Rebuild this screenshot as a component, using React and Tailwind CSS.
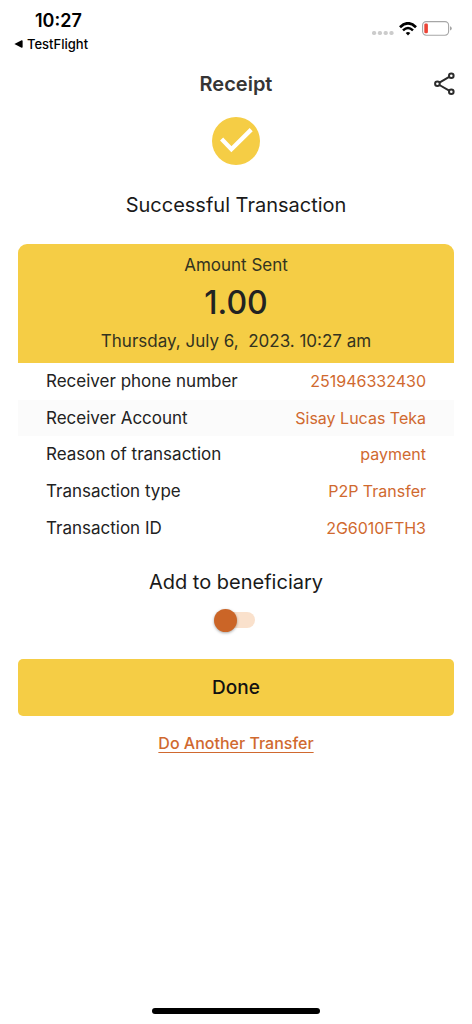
import React, { useState } from "react";

const details = [
  { label: "Receiver phone number", value: "251946332430" },
  { label: "Receiver Account", value: "Sisay Lucas Teka", shaded: true },
  { label: "Reason of transaction", value: "payment" },
  { label: "Transaction type", value: "P2P Transfer" },
  { label: "Transaction ID", value: "2G6010FTH3" },
];

function StatusBar() {
  return (
    <div className="flex h-[58px] items-start justify-between pl-[14px] pr-5 pt-[9px] text-black">
      <div>
        <div className="pl-[21px] text-lg font-semibold leading-6">10:27</div>
        <a href="#testflight" className="flex items-center gap-1 text-[13px] font-medium leading-[22px]">
          <svg className="h-2 w-[9px]" viewBox="0 0 9 8" fill="currentColor" aria-hidden="true">
            <path d="M0.4 4 L7.6 0.2 Q8.6 0 8.6 1 V7 Q8.6 8 7.6 7.8 Z" />
          </svg>
          TestFlight
        </a>
      </div>
      <div className="flex items-center gap-[5px] pt-3">
        <svg className="mt-2 h-1 w-[22px]" viewBox="0 0 22 4" fill="#cccccc" aria-hidden="true">
          <rect x="0" y="0" width="4.2" height="4" rx="1.7" />
          <rect x="5.8" y="0" width="4.2" height="4" rx="1.7" />
          <rect x="11.6" y="0" width="4.2" height="4" rx="1.7" />
          <rect x="17.4" y="0" width="4.2" height="4" rx="1.7" />
        </svg>
        <svg className="h-[14px] w-[18px]" viewBox="0 0 18 14" fill="none" stroke="currentColor" aria-hidden="true">
          <path d="M1 5.2 Q9 -2.6 17 5.2" strokeWidth="2.7" />
          <path d="M4 8.4 Q9 3.6 14 8.4" strokeWidth="2.5" />
          <path d="M6.7 11 Q9 8.9 11.3 11 L9 13.4 Z" fill="currentColor" stroke="none" />
        </svg>
        <svg className="h-[15px] w-[30px]" viewBox="0 0 30 15" aria-hidden="true">
          <rect x="0.6" y="0.6" width="26" height="13.6" rx="3.6" fill="none" stroke="#a6a6a6" strokeWidth="1.1" />
          <rect x="2.3" y="2.5" width="3.6" height="9.8" rx="1.3" fill="#eb4335" />
          <path d="M28 5.2 Q29.8 5.8 29.8 7.4 Q29.8 9 28 9.6 Z" fill="#a6a6a6" />
        </svg>
      </div>
    </div>
  );
}

function Header() {
  return (
    <header className="grid grid-cols-[1fr_auto_1fr] items-center px-4 py-2">
      <h1 className="col-start-2 text-xl font-semibold leading-9 text-[#353535]">Receipt</h1>
      <button type="button" aria-label="Share" className="justify-self-end text-[#2b2b2b]">
        <svg className="h-6 w-6" viewBox="0 0 24 24" fill="none" stroke="currentColor" strokeWidth="2">
          <circle cx="5.4" cy="11.8" r="2.3" />
          <circle cx="19.3" cy="3.7" r="2.3" />
          <circle cx="19.3" cy="19.8" r="2.3" />
          <path d="M7.4 10.6 L17.2 4.9 M7.4 13 L17.2 18.6" />
        </svg>
      </button>
    </header>
  );
}

function DetailsTable() {
  return (
    <table className="h-[183px] w-full">
      <tbody>
        {details.map((row) => (
          <tr key={row.label} className={row.shaded ? "bg-[#fbfbfb]" : ""}>
            <th scope="row" className="pl-7 text-left text-[17px] font-normal leading-6 text-[#222222]">
              {row.label}
            </th>
            <td className="pr-7 text-right text-base leading-6 text-[#d0692f]">{row.value}</td>
          </tr>
        ))}
      </tbody>
    </table>
  );
}

export default function App() {
  const [beneficiary, setBeneficiary] = useState(false);

  return (
    <div className="flex min-h-screen flex-col bg-white font-['Inter',sans-serif]">
      <StatusBar />
      <Header />

      <main className="flex flex-col px-[18px] pt-[7px]">
        {/* Result */}
        <svg className="h-12 w-12 self-center" viewBox="0 0 48 48" aria-hidden="true">
          <circle cx="24" cy="24" r="24" fill="#f5cd45" />
          <path d="M9.6 22 L19.4 32.2 L39.2 12.6" fill="none" stroke="#ffffff" strokeWidth="4.3" />
        </svg>
        <h2 className="mt-6 text-center text-xl leading-8 text-[#1a1a1a]">Successful Transaction</h2>

        {/* Receipt */}
        <section className="mt-[23px] rounded-t-[9px] bg-[#f5cd45] pb-2 pt-[7px] text-center text-[#333320]">
          <p className="text-[17px] leading-7">Amount Sent</p>
          <p className="text-[32px] font-medium leading-[48px] text-[#222222]">1.00</p>
          <p className="whitespace-pre-wrap text-[17px] leading-7">Thursday, July 6,  2023. 10:27 am</p>
        </section>
        <DetailsTable />

        {/* Beneficiary switch */}
        <div className="flex flex-col items-center pt-5">
          <label htmlFor="beneficiary" className="text-xl leading-8 text-[#1a1a1a]">
            Add to beneficiary
          </label>
          <input
            id="beneficiary"
            type="checkbox"
            role="switch"
            checked={beneficiary}
            onChange={(e) => setBeneficiary(e.target.checked)}
            className="relative mt-[14px] h-4 w-[38px] cursor-pointer appearance-none rounded-full bg-[#fae1cc] before:absolute before:-left-[3px] before:-top-[3px] before:h-[23px] before:w-[23px] before:rounded-full before:bg-[#cb6527] before:shadow-[0_1px_3px_rgba(0,0,0,0.35)] before:transition-transform checked:before:translate-x-5"
          />
        </div>

        {/* Actions */}
        <button
          type="button"
          className="mt-[31px] rounded-[5px] bg-[#f5cd45] py-3 text-[19px] font-medium leading-[33px] text-[#111111]"
        >
          Done
        </button>
        <a
          href="#transfer"
          className="mt-[15px] self-center text-base font-medium leading-6 text-[#d0692f] underline decoration-[#d0692f] underline-offset-3"
        >
          Do Another Transfer
        </a>
      </main>

      <div className="mx-auto mb-[10px] mt-auto h-[6px] w-[168px] rounded-full bg-black" />
    </div>
  );
}
